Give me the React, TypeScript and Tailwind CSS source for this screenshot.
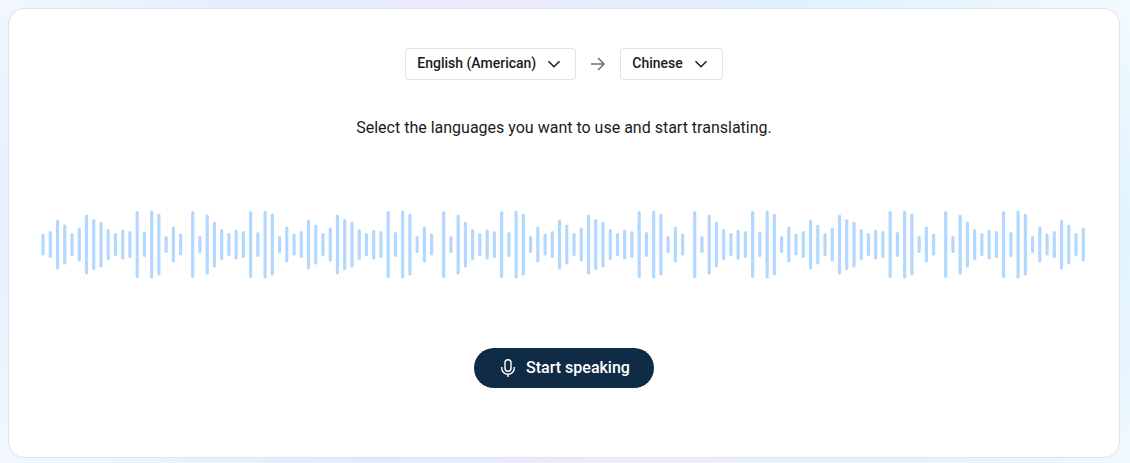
import { useId, useState } from "react";

const BAR_HEIGHTS = [
  67, 17, 60, 46, 31, 23, 30, 27, 67, 25, 68, 62, 17, 36, 22, 27, 50, 40, 23, 34, 60, 51, 46, 31, 23, 30, 27, 67, 25,
  68, 62, 17, 36, 22,
];
const BAR_STEP = 7.24;
const GROUP_WIDTH = 251;
const GROUP_START = -99.3;
const CENTER_Y = 34.5;

function Waveform() {
  const id = useId();
  return (
    <svg className="block h-[70px] w-full" aria-hidden="true">
      <defs>
        <g id={id}>
          {BAR_HEIGHTS.map((h, i) => (
            <rect key={i} x={i * BAR_STEP - 1.6} y={CENTER_Y - h / 2} width={3.2} height={h} rx={1.6} />
          ))}
        </g>
      </defs>
      <g fill="#b3d8ff">
        {Array.from({ length: 16 }, (_, n) => (
          <use key={n} href={`#${id}`} x={GROUP_START + n * GROUP_WIDTH} />
        ))}
      </g>
    </svg>
  );
}

function LanguageSelect({ label, initial, options }: { label: string; initial: string; options: string[] }) {
  const [value, setValue] = useState(initial);
  return (
    <div className="grid items-center">
      <select
        aria-label={label}
        value={value}
        onChange={(e) => setValue(e.target.value)}
        className="col-start-1 row-start-1 h-8 field-sizing-content cursor-pointer appearance-none rounded-[3px] border border-[#e3e3e3] bg-white pr-[39px] pb-0.5 pl-[11px] text-sm font-medium text-[#1b1b1b]"
      >
        {options.map((o) => (
          <option key={o}>{o}</option>
        ))}
      </select>
      <svg
        className="pointer-events-none col-start-1 row-start-1 mr-[15px] size-3.5 justify-self-end"
        viewBox="0 0 14 14"
        fill="none"
        stroke="#1b1b1b"
        strokeWidth="1.5"
        aria-hidden="true"
      >
        <path d="M1.500 4.200 7 9.700l5.500-5.500" />
      </svg>
    </div>
  );
}

export default function App() {
  return (
    <div className="min-h-screen bg-[radial-gradient(ellipse_at_center,transparent_68%,rgba(255,255,255,0.5)_100%),linear-gradient(76deg,#e5f3ff_0%,#e4f0ff_9%,#e0e8fe_29%,#ebebfd_47%,#e8edfd_60%,#ddf0ff_72%,#def1ff_86%,#e6f6ff_100%)] pt-2 pr-2.5 pb-[5px] pl-2 font-['Roboto',sans-serif] text-[#1b1b1b]">
      <main className="flex min-h-[450px] flex-col items-center rounded-2xl border border-[#dfe1e5] bg-white px-8 py-[39px]">
        <div className="flex items-center gap-3.5">
          <LanguageSelect
            label="Source language"
            initial="English (American)"
            options={["English (American)", "Chinese", "German", "French"]}
          />
          <svg
            className="size-4"
            viewBox="0 0 16 16"
            fill="none"
            stroke="#6e6e6e"
            strokeWidth="1.5"
            aria-hidden="true"
          >
            <path d="M1 8h13M8 2l6 6-6 6" />
          </svg>
          <LanguageSelect
            label="Target language"
            initial="Chinese"
            options={["Chinese", "English (American)", "German", "French"]}
          />
        </div>
        <p className="mt-9 text-base">Select the languages you want to use and start translating.</p>
        <div className="mt-[70px] w-full">
          <Waveform />
        </div>
        <button
          type="button"
          className="mt-[68px] flex h-10 cursor-pointer items-center gap-2 rounded-full bg-[#0f2b46] px-6 text-base font-medium text-white"
        >
          <svg className="size-5" viewBox="0 0 20 20" fill="none" stroke="currentColor" strokeWidth="1.4" aria-hidden="true">
            <rect x="7" y="1.700" width="6" height="11.600" rx="3" />
            <path d="M3.700 9v1a6.300 6.300 0 0 0 12.600 0V9M10 16.300V19" />
          </svg>
          Start speaking
        </button>
      </main>
    </div>
  );
}
